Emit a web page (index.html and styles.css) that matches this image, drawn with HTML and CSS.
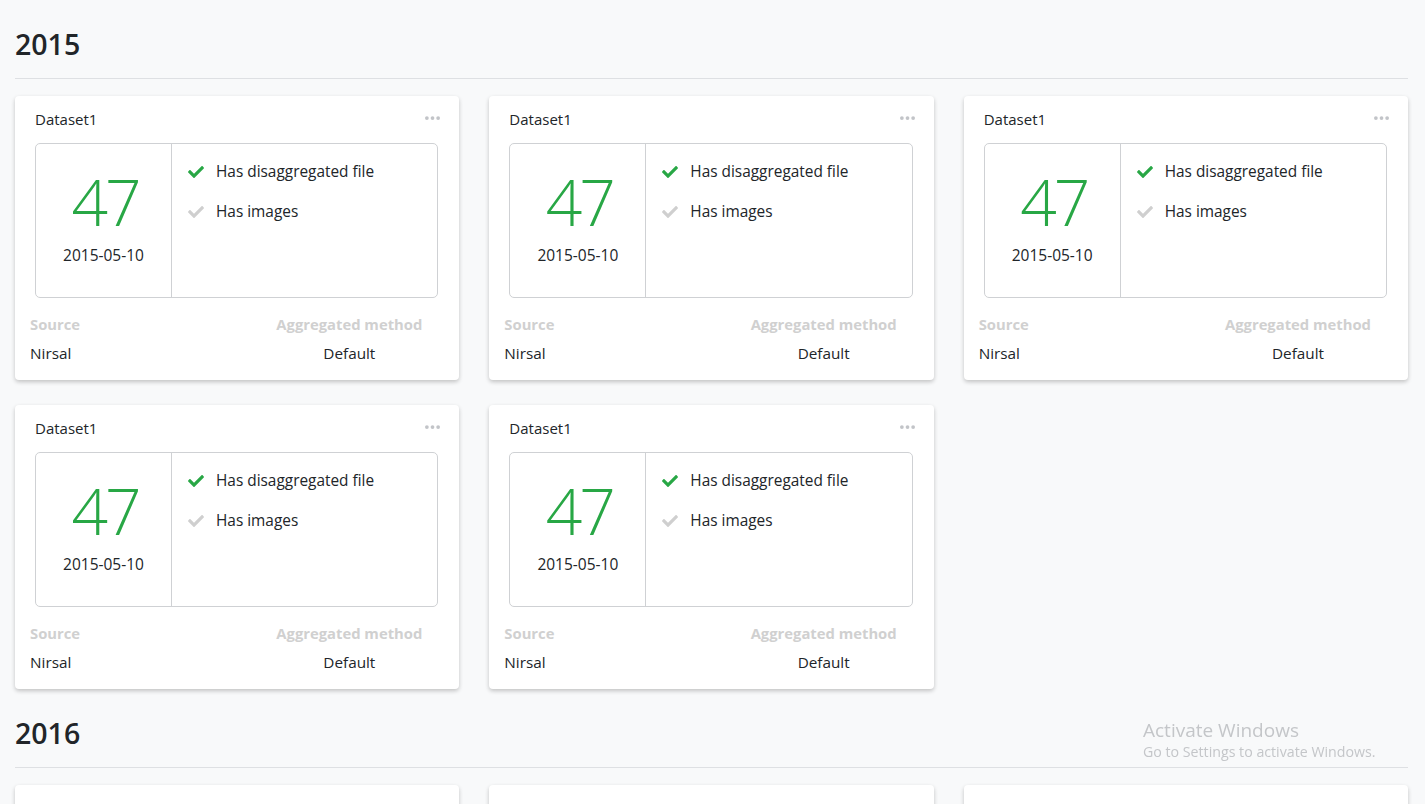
FILE: index.html
```html
<!DOCTYPE html>
<html lang="en">
<head>
<meta charset="utf-8">
<title>Datasets</title>
<link rel="stylesheet" href="styles.css">
</head>
<body>
<svg class="defs" width="0" height="0" aria-hidden="true">
  <defs>
    <symbol id="check" viewBox="0 0 512 512">
      <path d="M173.898 439.404l-166.4-166.4c-9.997-9.997-9.997-26.206 0-36.204l36.203-36.204c9.997-9.998 26.207-9.998 36.204 0L192 312.69 432.095 72.596c9.997-9.997 26.207-9.997 36.204 0l36.203 36.204c9.997 9.997 9.997 26.206 0 36.204l-294.4 294.401c-9.998 9.997-26.207 9.997-36.204-.001z"/>
    </symbol>
    <symbol id="dots" viewBox="0 0 16 4">
      <circle cx="2" cy="2" r="2"/><circle cx="8" cy="2" r="2"/><circle cx="14" cy="2" r="2"/>
    </symbol>
  </defs>
</svg>

<section class="year">
  <h2 class="year-title">2015</h2>
  <hr class="year-rule">
  <div class="grid">
    <div class="card">
      <div class="card-head"><span>Dataset1</span><svg class="dots"><use href="#dots"/></svg></div>
      <div class="box">
        <div class="box-left"><div class="count">47</div><div class="date">2015-05-10</div></div>
        <div class="box-right">
          <div class="flag"><svg class="chk on"><use href="#check"/></svg>Has disaggregated file</div>
          <div class="flag"><svg class="chk off"><use href="#check"/></svg>Has images</div>
        </div>
      </div>
      <div class="foot">
        <div class="col"><div class="lbl">Source</div><div class="val">Nirsal</div></div>
        <div class="col col-center"><div class="lbl">Aggregated method</div><div class="val">Default</div></div>
      </div>
    </div>
    <div class="card">
      <div class="card-head"><span>Dataset1</span><svg class="dots"><use href="#dots"/></svg></div>
      <div class="box">
        <div class="box-left"><div class="count">47</div><div class="date">2015-05-10</div></div>
        <div class="box-right">
          <div class="flag"><svg class="chk on"><use href="#check"/></svg>Has disaggregated file</div>
          <div class="flag"><svg class="chk off"><use href="#check"/></svg>Has images</div>
        </div>
      </div>
      <div class="foot">
        <div class="col"><div class="lbl">Source</div><div class="val">Nirsal</div></div>
        <div class="col col-center"><div class="lbl">Aggregated method</div><div class="val">Default</div></div>
      </div>
    </div>
    <div class="card">
      <div class="card-head"><span>Dataset1</span><svg class="dots"><use href="#dots"/></svg></div>
      <div class="box">
        <div class="box-left"><div class="count">47</div><div class="date">2015-05-10</div></div>
        <div class="box-right">
          <div class="flag"><svg class="chk on"><use href="#check"/></svg>Has disaggregated file</div>
          <div class="flag"><svg class="chk off"><use href="#check"/></svg>Has images</div>
        </div>
      </div>
      <div class="foot">
        <div class="col"><div class="lbl">Source</div><div class="val">Nirsal</div></div>
        <div class="col col-center"><div class="lbl">Aggregated method</div><div class="val">Default</div></div>
      </div>
    </div>
    <div class="card">
      <div class="card-head"><span>Dataset1</span><svg class="dots"><use href="#dots"/></svg></div>
      <div class="box">
        <div class="box-left"><div class="count">47</div><div class="date">2015-05-10</div></div>
        <div class="box-right">
          <div class="flag"><svg class="chk on"><use href="#check"/></svg>Has disaggregated file</div>
          <div class="flag"><svg class="chk off"><use href="#check"/></svg>Has images</div>
        </div>
      </div>
      <div class="foot">
        <div class="col"><div class="lbl">Source</div><div class="val">Nirsal</div></div>
        <div class="col col-center"><div class="lbl">Aggregated method</div><div class="val">Default</div></div>
      </div>
    </div>
    <div class="card">
      <div class="card-head"><span>Dataset1</span><svg class="dots"><use href="#dots"/></svg></div>
      <div class="box">
        <div class="box-left"><div class="count">47</div><div class="date">2015-05-10</div></div>
        <div class="box-right">
          <div class="flag"><svg class="chk on"><use href="#check"/></svg>Has disaggregated file</div>
          <div class="flag"><svg class="chk off"><use href="#check"/></svg>Has images</div>
        </div>
      </div>
      <div class="foot">
        <div class="col"><div class="lbl">Source</div><div class="val">Nirsal</div></div>
        <div class="col col-center"><div class="lbl">Aggregated method</div><div class="val">Default</div></div>
      </div>
    </div>
  </div>
</section>

<section class="year">
  <h2 class="year-title">2016</h2>
  <hr class="year-rule">
  <div class="grid">
    <div class="card">
      <div class="card-head"><span>Dataset1</span><svg class="dots"><use href="#dots"/></svg></div>
      <div class="box">
        <div class="box-left"><div class="count">47</div><div class="date">2016-05-10</div></div>
        <div class="box-right">
          <div class="flag"><svg class="chk on"><use href="#check"/></svg>Has disaggregated file</div>
          <div class="flag"><svg class="chk off"><use href="#check"/></svg>Has images</div>
        </div>
      </div>
    </div>
    <div class="card">
      <div class="card-head"><span>Dataset1</span><svg class="dots"><use href="#dots"/></svg></div>
      <div class="box">
        <div class="box-left"><div class="count">47</div><div class="date">2016-05-10</div></div>
        <div class="box-right">
          <div class="flag"><svg class="chk on"><use href="#check"/></svg>Has disaggregated file</div>
          <div class="flag"><svg class="chk off"><use href="#check"/></svg>Has images</div>
        </div>
      </div>
    </div>
    <div class="card">
      <div class="card-head"><span>Dataset1</span><svg class="dots"><use href="#dots"/></svg></div>
      <div class="box">
        <div class="box-left"><div class="count">47</div><div class="date">2016-05-10</div></div>
        <div class="box-right">
          <div class="flag"><svg class="chk on"><use href="#check"/></svg>Has disaggregated file</div>
          <div class="flag"><svg class="chk off"><use href="#check"/></svg>Has images</div>
        </div>
      </div>
    </div>
  </div>
</section>

<div class="watermark">
  <div class="wm-title">Activate Windows</div>
  <div class="wm-sub">Go to Settings to activate Windows.</div>
</div>
</body>
</html>
```

FILE: styles.css
```css
* { box-sizing: border-box; }

html, body {
  margin: 0;
  padding: 0;
}

body {
  background: #f8f9fa;
  color: #212529;
  font-family: "Open Sans", "Noto Sans", "Liberation Sans", sans-serif;
  font-size: 15px;
  padding: 0 17px 0 15px;
  overflow: hidden;
  height: 804px;
}

.defs { position: absolute; width: 0; height: 0; }

.year { padding-top: 24px; }

.year-title {
  margin: 0;
  font-size: 28.5px;
  font-weight: 600;
  line-height: 40px;
  color: #212529;
}

.year-rule {
  margin: 14px 0 17px;
  border: 0;
  border-top: 1px solid #dee0e3;
  height: 0;
}

.grid {
  display: grid;
  grid-template-columns: repeat(3, 1fr);
  column-gap: 30px;
  row-gap: 25px;
}

.card {
  background: #fff;
  border-radius: 4px;
  box-shadow: 0 2px 4px rgba(0, 0, 0, 0.22);
  padding: 12px 15px 16px;
  height: 284px;
}

.card-head {
  display: flex;
  justify-content: space-between;
  align-items: flex-start;
  margin: 0 6px 13px 5px;
  line-height: 22px;
  font-size: 15px;
}

.dots {
  width: 15px;
  height: 4px;
  fill: #c2c4c8;
  margin-top: 8px;
  margin-right: -2px;
}

.box {
  display: flex;
  height: 155px;
  margin: 0 6px 0 5px;
  border: 1px solid #cfd1d4;
  border-radius: 5px;
}

.box-left {
  width: 136px;
  border-right: 1px solid #cfd1d4;
  display: flex;
  flex-direction: column;
  align-items: center;
  padding-top: 20px;
}

.count {
  font-size: 64px;
  font-weight: 300;
  line-height: 76px;
  color: #28a745;
  letter-spacing: -3px;
  padding-left: 3px;
}

.date {
  margin-top: 4px;
  font-size: 15.5px;
  line-height: 22px;
}

.box-right {
  flex: 1;
  padding: 17px 0 0 15px;
  display: flex;
  flex-direction: column;
  gap: 18px;
}

.flag {
  display: flex;
  align-items: center;
  line-height: 22px;
  font-size: 15.4px;
}

.chk {
  width: 18px;
  height: 16px;
  margin-right: 11px;
}

.chk.on { fill: #28a745; }
.chk.off { fill: #cfcfcf; }

.foot {
  display: flex;
  justify-content: space-between;
  padding-right: 22px;
  margin-top: 15px;
}

.col { display: flex; flex-direction: column; gap: 7px; }
.col-center { align-items: center; }

.lbl {
  font-weight: 700;
  color: #d0d0d0;
  line-height: 22px;
  font-size: 14.8px;
}

.val {
  line-height: 22px;
  font-size: 15.3px;
}

.watermark {
  position: fixed;
  left: 1143px;
  top: 717px;
  color: #c4c6c9;
  font-family: "Open Sans", "Noto Sans", sans-serif;
}

.wm-title { font-size: 19px; line-height: 26px; }
.wm-sub { font-size: 14.2px; line-height: 18px; }
```
